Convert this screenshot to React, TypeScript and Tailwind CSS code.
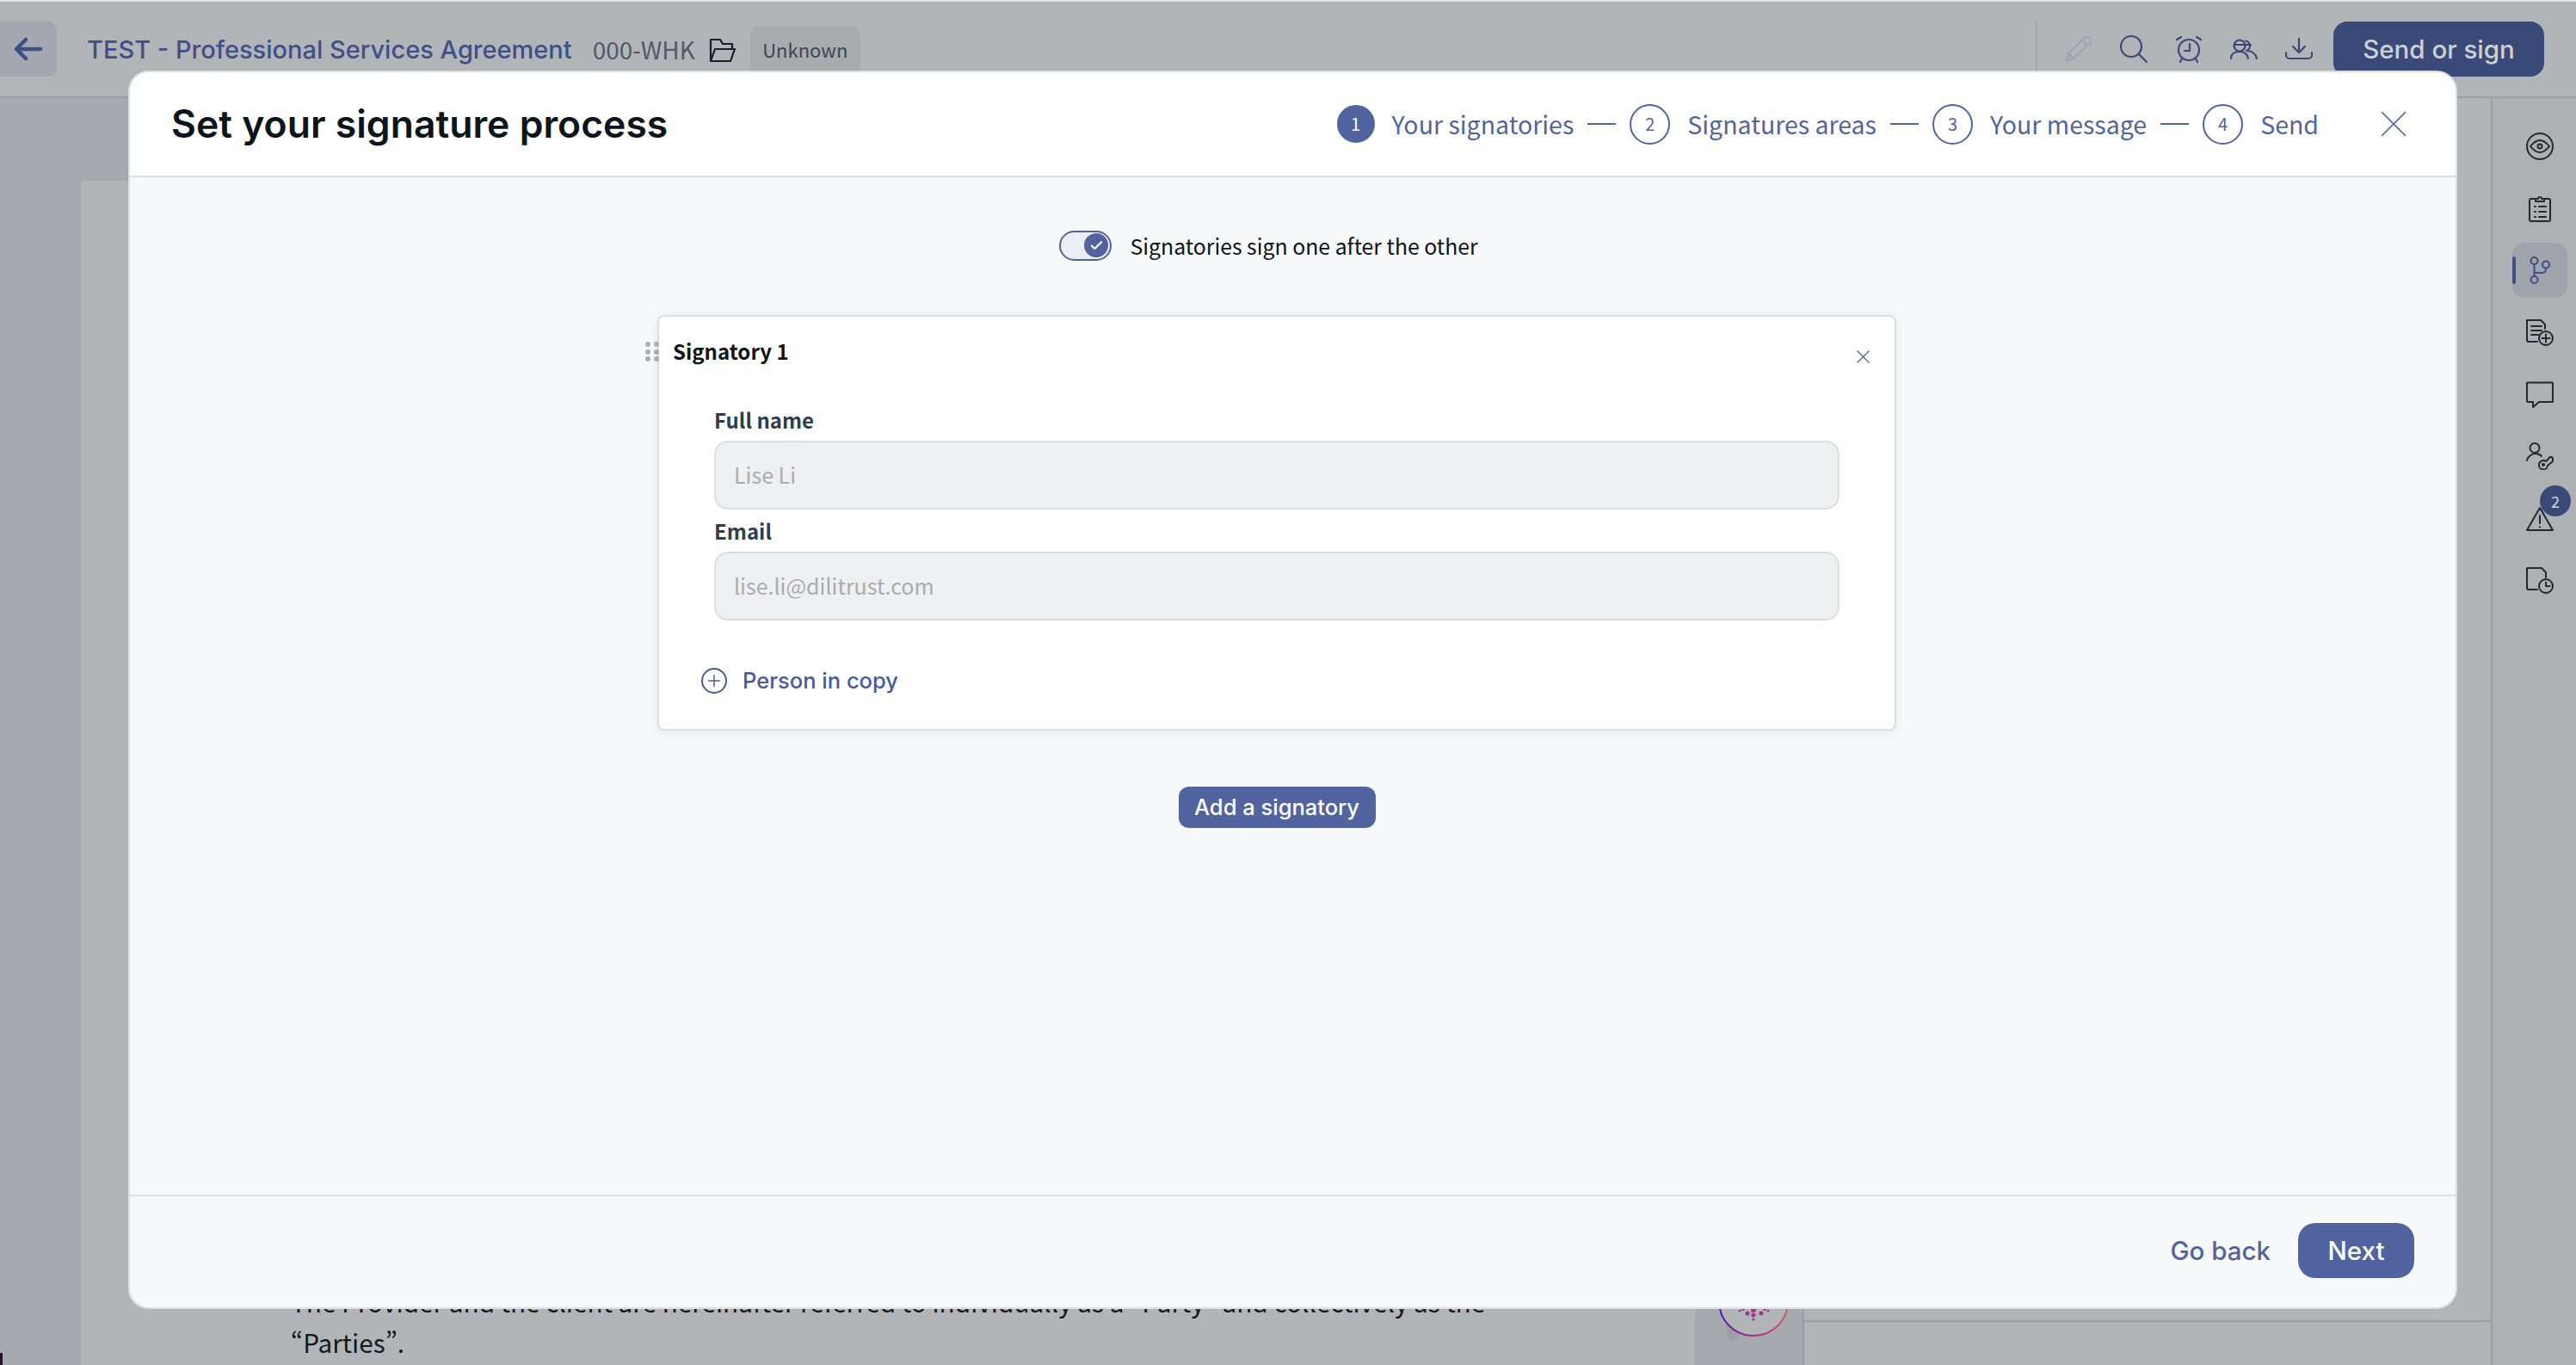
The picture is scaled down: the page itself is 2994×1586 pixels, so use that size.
import { Check, Plus } from "lucide-react";

const steps = [
  { n: 1, label: "Your signatories", active: true },
  { n: 2, label: "Signatures areas" },
  { n: 3, label: "Your message" },
  { n: 4, label: "Send" },
];

function FolderIcon() {
  return (
    <svg width="33" height="29" viewBox="0 0 33 29" fill="none" stroke="#14202b" strokeWidth="2.2" strokeLinejoin="round">
      <path d="M3 27V2h11l3 5h11v6" />
      <path d="M3 27h23l5-14H8z" />
    </svg>
  );
}

function PencilIcon() {
  return (
    <svg width="32" height="32" viewBox="0 0 32 32" fill="none" stroke="#9ea3b2" strokeWidth="2" strokeLinejoin="round">
      <path d="M23 3a4 4 0 0 1 6 6L10 27l-8 3 2-9z" />
      <path d="M4 21l6 6M20 6l6 6" />
    </svg>
  );
}

function SearchIcon() {
  return (
    <svg width="32" height="32" viewBox="0 0 32 32" fill="none" stroke="#3a4a78" strokeWidth="2.200" strokeLinecap="round">
      <circle cx="13" cy="13" r="12" />
      <path d="M22 22l9 9" />
    </svg>
  );
}

function AlarmIcon() {
  return (
    <svg width="32" height="32" viewBox="0 0 32 32" fill="none" stroke="#3a4a78" strokeWidth="2.200" strokeLinecap="round" strokeLinejoin="round">
      <circle cx="16" cy="17" r="12" />
      <path d="M17 10v8h-6M2 5l5-3M30 5l-5-3M8 27l-2 4M24 27l2 4" />
    </svg>
  );
}

function PeopleIcon() {
  return (
    <svg width="32" height="24" viewBox="0 0 32 24" fill="none" stroke="#3a4a78" strokeWidth="2.200" strokeLinecap="round">
      <circle cx="11" cy="8" r="6.500" />
      <path d="M5 7h12M18 2.500a6 6 0 0 1 1 11.500M18 7h6" />
      <path d="M1 23c0-5 4-8 10-8s9 3 10 8M21 14c5 1 9 4 10 9" />
    </svg>
  );
}

function DownloadIcon() {
  return (
    <svg width="32" height="26" viewBox="0 0 32 26" fill="none" stroke="#3a4a78" strokeWidth="2.200" strokeLinecap="round" strokeLinejoin="round">
      <path d="M16 1v16M9 10l7 7 7-7" />
      <path d="M1 17v3a4 4 0 0 0 4 4h22a4 4 0 0 0 4-4v-3" />
    </svg>
  );
}

function EyeIcon() {
  return (
    <svg width="32" height="32" viewBox="0 0 32 32" fill="none" stroke="#23292f" strokeWidth="2">
      <circle cx="16" cy="16" r="15" />
      <path d="M5 16c4-5 7-7 11-7s7 2 11 7c-4 5-7 7-11 7s-7-2-11-7z" />
      <circle cx="16" cy="16" r="2.500" />
    </svg>
  );
}

function ClipboardIcon() {
  return (
    <svg width="26" height="32" viewBox="0 0 26 32" fill="none" stroke="#23292f" strokeWidth="2" strokeLinecap="round" strokeLinejoin="round">
      <path d="M8 5H3a2 2 0 0 0-2 2v22a2 2 0 0 0 2 2h20a2 2 0 0 0 2-2V7a2 2 0 0 0-2-2h-5" />
      <path d="M8 8V5h3a2 2 0 0 1 4 0h3v3z" />
      <path d="M7 14h1M12 14h8M7 20h1M12 20h8M7 26h1M12 26h8" />
    </svg>
  );
}

function BranchIcon() {
  return (
    <svg width="24" height="32" viewBox="0 0 24 32" fill="none" stroke="#3f5089" strokeWidth="2">
      <circle cx="5.500" cy="5" r="4" />
      <circle cx="5.500" cy="27" r="4" />
      <circle cx="19" cy="9.500" r="4" />
      <path d="M5.500 9v14M5.500 19H15a4 4 0 0 0 4-4v-1.500" />
    </svg>
  );
}

function DocPlusIcon() {
  return (
    <svg width="32" height="32" viewBox="0 0 32 32" fill="none" stroke="#23292f" strokeWidth="2" strokeLinecap="round" strokeLinejoin="round">
      <path d="M13 27H3a2 2 0 0 1-2-2V2h16l5 5v5" />
      <path d="M6 9h12M6 14h12M6 19h8" />
      <circle cx="23" cy="23" r="8" />
      <path d="M23 18.500v9M18.500 23h9" />
    </svg>
  );
}

function CommentIcon() {
  return (
    <svg width="32" height="31" viewBox="0 0 32 31" fill="none" stroke="#23292f" strokeWidth="2" strokeLinejoin="round">
      <path d="M2 1.500h28a1 1 0 0 1 1 1V24H15l-7 6v-6H2a1 1 0 0 1-1-1V2.500a1 1 0 0 1 1-1z" />
    </svg>
  );
}

function UserKeyIcon() {
  return (
    <svg width="32" height="32" viewBox="0 0 32 32" fill="none" stroke="#23292f" strokeWidth="2" strokeLinecap="round" strokeLinejoin="round">
      <circle cx="10" cy="6.500" r="5.500" />
      <path d="M1 21c1-4 5-8 10-8 3 0 5 1 7 3" />
      <path d="M15 26a5 5 0 0 1 8-4l5-5h2l1 2v3l-6 5a5 5 0 0 1-10-1z" />
      <circle cx="20" cy="26" r="1" />
    </svg>
  );
}

function WarningIcon() {
  return (
    <svg width="32" height="29" viewBox="0 0 32 29" fill="none" stroke="#23292f" strokeWidth="2" strokeLinecap="round" strokeLinejoin="round">
      <path d="M16 2 1 28h30z" />
      <path d="M16 11v9M16 24v.5" />
    </svg>
  );
}

function DocClockIcon() {
  return (
    <svg width="32" height="32" viewBox="0 0 32 32" fill="none" stroke="#23292f" strokeWidth="2" strokeLinecap="round" strokeLinejoin="round">
      <path d="M13 27H3a2 2 0 0 1-2-2V2h17l5 5v6" />
      <circle cx="23" cy="23" r="8" />
      <path d="M23 18.500V23h4.500" />
    </svg>
  );
}

function Cross({ size, color, width }: { size: number; color: string; width: number }) {
  return (
    <svg width={size} height={size} viewBox="0 0 30 30" fill="none" stroke={color} strokeWidth={width}>
      <path d="M1 1l28 28M29 1 1 29" />
    </svg>
  );
}

function SidebarIcon({ children, active, badge }: { children: React.ReactNode; active?: boolean; badge?: string }) {
  return (
    <div className={`relative w-[64px] h-[64px] flex items-center justify-center rounded-[14px] mb-2 ${active ? "bg-[#9fa3ab]" : ""}`}>
      {active && <div className="absolute left-0 top-[16px] w-[4px] h-[32px] rounded-sm bg-[#3f5089]" />}
      {children}
      {badge && (
        <div className="absolute right-[-4px] top-[-6px] w-[36px] h-[36px] rounded-full bg-[#3a4a78] text-[#d3d6dc] text-[18px] flex items-center justify-center">
          {badge}
        </div>
      )}
    </div>
  );
}

function Field({ label, value }: { label: string; value: string }) {
  return (
    <div>
      <div className="h-[49px] flex items-end pb-[8px] text-[24px] leading-[32px] font-semibold text-[#2f3d4f]">{label}</div>
      <div className="h-[80px] flex items-center px-[21px] bg-[#eff0f2] border-2 border-[#dcdee3] rounded-[16px] text-[25px] text-[#a8acb2]">
        {value}
      </div>
    </div>
  );
}

export default function App() {
  return (
    <div className="relative w-[2994px] h-[1586px] overflow-hidden flex flex-col bg-[#a6a9ad] font-['Noto_Sans_CJK_SC',sans-serif] [font-feature-settings:'pwid']">
      <div className="h-[2px] bg-[#e3e4e4]" />

      <header className="h-[112px] shrink-0 bg-[#b1b5b7] border-b-2 border-[#9b9ea3] flex items-start pt-[23px]">
        <button className="w-[66px] h-[64px] bg-[#a2a7b0] rounded-r-[10px] flex items-center justify-center">
          <svg width="34" height="28" viewBox="0 0 34 28" fill="none" stroke="#3f5089" strokeWidth="4.500" strokeLinecap="round" strokeLinejoin="round">
            <path d="M31 14H4M14 3 3 14l11 11" />
          </svg>
        </button>
        <div className="ml-[35px] mt-[15px] text-[29px] leading-[36px] font-['Inter',sans-serif] font-medium text-[#3f5089]">
          TEST - Professional Services Agreement
        </div>
        <div className="ml-[24px] mt-[14px] text-[28px] leading-[36px] text-[#505a68]">000-WHK</div>
        <div className="ml-[15px] mt-[19px]"><FolderIcon /></div>
        <div className="ml-[16px] mt-[5px] h-[60px] w-[128px] pb-[6px] flex items-center justify-center rounded-[10px] bg-[#a8acae] text-[22px] text-[#3b4652]">Unknown</div>
        <div className="flex-1" />
        <div className="h-[64px] border-l-2 border-[#a0a3a7] flex items-center pl-[32px] gap-[32px] mr-[24px]">
          <PencilIcon />
          <SearchIcon />
          <AlarmIcon />
          <PeopleIcon />
          <DownloadIcon />
        </div>
        <button className="w-[245px] h-[64px] mr-[37px] rounded-[16px] bg-[#3a4a78] text-[#cdd0d5] text-[29.500px] font-['Inter',sans-serif] font-medium">
          Send or sign
        </button>
      </header>

      <main className="flex-1 flex min-h-0">
        <div className="w-[94px] shrink-0 relative">
          <div className="absolute left-0 bottom-0 w-[3px] h-[14px] bg-[#2a1030]" />
        </div>
        <div className="w-[1876px] shrink-0 mt-[96px] bg-[#b1b5b7] flex flex-col justify-end pl-[244px] pb-[3px] text-[29.750px] leading-[47px] text-[#14181d]">
          <p className="whitespace-nowrap">The Provider and the client are hereinafter referred to individually as a “Party” and collectively as the</p>
          <p>“Parties”.</p>
        </div>
        <div className="relative w-[127px] shrink-0 border-r-2 border-[#9b9ea3] flex flex-col justify-end items-center pl-[10px] pb-[33px]">
          <div className="absolute left-[37px] bottom-[28px] w-[14px] h-[60px] rounded-full bg-[#9c9fa3]" />
          <svg className="relative" width="82" height="82" viewBox="0 0 82 82" fill="#b1b5b7">
            <defs>
              <linearGradient id="ring" x1="0" y1="0" x2="1" y2="0">
                <stop offset="0" stopColor="#5a14b4" />
                <stop offset="0.5" stopColor="#a52d8c" />
                <stop offset="1" stopColor="#c8605a" />
              </linearGradient>
            </defs>
            <circle cx="41" cy="41" r="40" stroke="url(#ring)" strokeWidth="2" />
            <g fill="#a0368c">
              <circle cx="25" cy="52" r="1.500" />
              <circle cx="29" cy="50" r="2" />
              <circle cx="41" cy="51" r="3" />
              <circle cx="34" cy="55" r="2.500" />
              <circle cx="41" cy="57" r="2.500" />
              <circle cx="50" cy="55" r="2.500" />
              <circle cx="54" cy="50" r="2" />
              <circle cx="58" cy="52" r="1.500" />
              <circle cx="41" cy="62" r="1.500" />
            </g>
          </svg>
        </div>
        <div className="flex-1 bg-[#b1b5b7] flex flex-col justify-end">
          <div className="h-[52px] border-t-2 border-[#9b9ea3]" />
        </div>
        <aside className="w-[99px] shrink-0 bg-[#adb1b4] border-l-2 border-[#9b9ea3] flex flex-col items-start pl-[23px] pt-[24px]">
          <SidebarIcon><EyeIcon /></SidebarIcon>
          <SidebarIcon><ClipboardIcon /></SidebarIcon>
          <SidebarIcon active><BranchIcon /></SidebarIcon>
          <SidebarIcon><DocPlusIcon /></SidebarIcon>
          <SidebarIcon><CommentIcon /></SidebarIcon>
          <SidebarIcon><UserKeyIcon /></SidebarIcon>
          <SidebarIcon badge="2"><WarningIcon /></SidebarIcon>
          <SidebarIcon><DocClockIcon /></SidebarIcon>
        </aside>
      </main>

      <div className="absolute left-[149px] top-[82px] w-[2707px] h-[1439px] flex flex-col rounded-[24px] border-2 border-[#dcdee3] bg-[#f6f8fa] overflow-hidden">
        <div className="h-[122px] shrink-0 bg-white border-b-2 border-[#dcdee3] flex items-center pl-[48px] pr-[57px]">
          <h1 className="font-['Inter',sans-serif] font-semibold text-[44.500px] leading-[50px] text-[#0c151c]">Set your signature process</h1>
          <div className="flex-1" />
          <div className="flex items-center text-[28.500px] text-[#5264a0]">
            {steps.map((s, i) => (
              <div key={s.n} className="flex items-center">
                {i > 0 && <div className="w-[33px] h-[2px] mx-[16px] bg-[#5264a0]" />}
                <div className={`rounded-full border-2 border-[#5264a0] flex items-center justify-center text-[20px] ${s.active ? "w-[44px] h-[44px] bg-[#5264a0] text-white" : "w-[47px] h-[47px]"}`}>
                  {s.n}
                </div>
                <span className="ml-[20px] leading-[38px]">{s.label}</span>
              </div>
            ))}
          </div>
          <div className="ml-[72px]"><Cross size={30} color="#5264a0" width={1.6} /></div>
        </div>

        <div className="flex-1 flex flex-col items-center pr-[37px]">
          <div className="mt-[61px] h-[36px] flex items-center gap-[21px] ml-[-19px]">
            <div className="w-[61px] h-[35px] rounded-full border-2 border-[#5264a0] bg-[#eceef6] flex items-center justify-end pr-[2px]">
              <div className="w-[28px] h-[28px] rounded-full bg-[#5264a0] flex items-center justify-center">
                <Check size={17} strokeWidth={3} className="text-white" />
              </div>
            </div>
            <span className="text-[24.800px] leading-[36px] text-[#0f1418]">Signatories sign one after the other</span>
          </div>

          <div className="relative mt-[63px] w-[1440px] h-[483px] shrink-0 bg-white border-2 border-[#dcdee3] rounded-[8px] shadow-[0_2px_12px_rgba(30,40,70,0.08)] px-[64px] pt-[95px]">
            <div className="absolute left-[-16px] top-[29px] grid grid-cols-2 gap-x-[4px] gap-y-[2.500px]">
              {[0, 1, 2, 3, 4, 5].map((d) => (
                <div key={d} className="w-[6px] h-[6px] rounded-full bg-[#a9aeb6]" />
              ))}
            </div>
            <div className="absolute left-[16px] top-[23px] text-[24px] leading-[34px] font-semibold text-[#0f1418]">Signatory 1</div>
            <div className="absolute right-[29px] top-[39px]"><Cross size={15} color="#4a5da8" width={2.4} /></div>
            <Field label="Full name" value="Lise Li" />
            <Field label="Email" value="lise.li@dilitrust.com" />
            <div className="mt-[55px] ml-[-15px] flex items-center gap-[18px] text-[25.500px] leading-[30px] font-['Inter',sans-serif] font-medium text-[#4a5a9b]">
              <div className="w-[30px] h-[30px] rounded-full border-2 border-[#4a5a9b] flex items-center justify-center">
                <Plus size={22} strokeWidth={1.600} />
              </div>
              Person in copy
            </div>
          </div>

          <button className="mt-[65px] w-[229px] h-[48px] rounded-[12px] bg-[#5264a0] text-white text-[25.500px] font-['Inter',sans-serif] font-medium">
            Add a signatory
          </button>
        </div>

        <div className="h-[131px] shrink-0 border-t-2 border-[#dcdee3] flex items-center justify-end pr-[48px] gap-[32px] pb-[3px]">
          <span className="font-['Inter',sans-serif] font-medium text-[29.500px] text-[#5264a0]">Go back</span>
          <button className="w-[135px] h-[64px] rounded-[20px] bg-[#5264a0] text-white font-['Inter',sans-serif] font-medium text-[29.500px]">Next</button>
        </div>
      </div>
    </div>
  );
}
